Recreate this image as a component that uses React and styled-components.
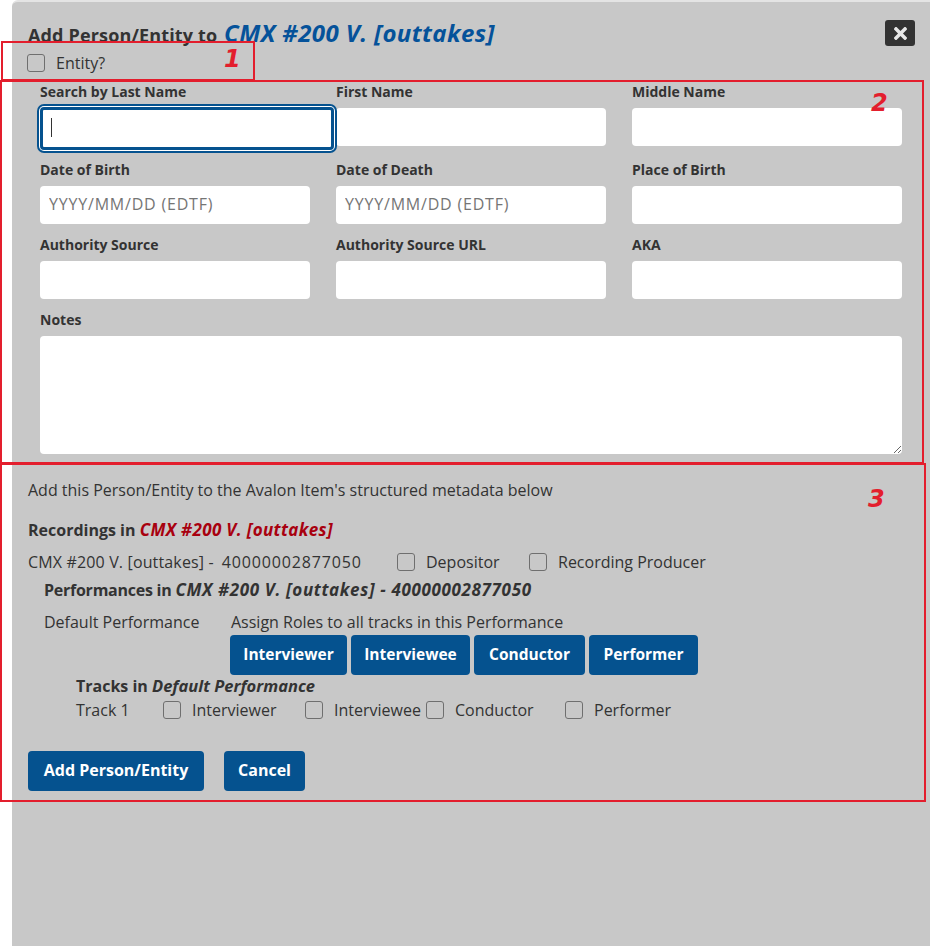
import React from "react";
import styled, { createGlobalStyle } from "styled-components";
import { FaTimes } from "react-icons/fa";

const Global = createGlobalStyle`
  html, body { margin: 0; padding: 0; background: #fff; }
  body { font-family: "Open Sans", "Liberation Sans", sans-serif; color: #333; overflow: hidden; }
  * { box-sizing: border-box; }
`;

const Page = styled.div`
  position: relative;
  width: 930px;
  height: 946px;
  overflow: hidden;
  padding: 0 0 0 12px;
`;
const Modal = styled.div`
  height: 946px;
  background: #c8c8c8;
  border-top: 2px solid #e4e4e4;
  border-radius: 6px 0 0 0;
  padding: 18px 15px 0 16px;
`;
const Header = styled.div`
  display: flex;
  justify-content: space-between;
  align-items: flex-start;
  height: 28px;
`;
const Title = styled.h2`
  margin: 0;
  font-size: 18px;
  line-height: 26px;
  font-weight: 700;
  letter-spacing: 0.15px;
`;
const TitleName = styled.em`
  display: inline-block;
  margin-left: 2px;
  font-size: 24px;
  line-height: 26px;
  letter-spacing: 0.4px;
  color: #05529a;
`;
const CloseButton = styled.button`
  width: 30px;
  height: 26px;
  border: 0;
  border-radius: 3px;
  background: #333;
  color: #e8e8e8;
  display: flex;
  align-items: center;
  justify-content: center;
  font-size: 19px;
  padding: 0;
`;
const CheckLabel = styled.label`
  display: inline-flex;
  align-items: center;
  gap: 11px;
  font-size: 16px;
  line-height: 24px;
  white-space: nowrap;
`;
const EntityRow = styled.div`
  height: 30px;
  margin-left: -1px;
  display: flex;
  align-items: center;
`;
const Check = styled.input.attrs({ type: "checkbox" })`
  appearance: none;
  width: 18px;
  height: 18px;
  margin: 0;
  border: 1px solid #6f6f6f;
  border-radius: 3px;
  background: transparent;
  flex: none;
`;
const Grid = styled.div`
  margin-top: 6px;
  padding-left: 12px;
  display: grid;
  grid-template-columns: repeat(3, 270px);
  column-gap: 26px;
  row-gap: 13px;
`;
const Field = styled.div`
  position: relative;
  grid-column: ${(p) => (p.$full ? "1 / -1" : "auto")};
  margin-bottom: ${(p) => (p.$first ? "3px" : "0")};
`;
const FieldLabel = styled.label`
  display: block;
  font-size: 14px;
  font-weight: 700;
  line-height: 16px;
  margin-bottom: 8px;
`;
const Input = styled.input`
  display: block;
  width: 100%;
  height: 38px;
  padding: 0 9px 2px;
  border: 0;
  border-radius: 4px;
  background: #fff;
  font-family: inherit;
  font-size: 16px;
  outline: 0;
  &::placeholder { color: #757575; opacity: 1; letter-spacing: 0.8px; }
`;
const FocusedInput = styled(Input)`
  position: relative;
  z-index: 1;
  width: calc(100% + 24px);
  height: 43px;
  margin: -1px 0 -4px;
  border: 3px solid #05528f;
  box-shadow: 0 0 0 1px #fff, 0 0 0 3px #05528f;
`;
const Caret = styled.span`
  position: absolute;
  z-index: 2;
  left: 11px;
  top: 34px;
  width: 1px;
  height: 19px;
  background: #333;
`;
const Notes = styled.textarea`
  display: block;
  width: 100%;
  height: 118px;
  border: 0;
  border-radius: 4px;
  background: #fff;
  outline: 0;
`;
const Roles = styled.div`
  margin-top: 24px;
`;
const Intro = styled.p`
  margin: 0;
  font-size: 16px;
  line-height: 24px;
`;
const Heading = styled.div`
  margin: ${(p) => p.$margin || "0"};
  font-size: 16px;
  line-height: 24px;
  font-weight: 700;
  white-space: nowrap;
  letter-spacing: ${(p) => p.$track || "0"};
  em {
    color: ${(p) => p.$accent || "#333"};
    font-size: ${(p) => p.$emSize || "17px"};
    letter-spacing: ${(p) => p.$emTrack || "0.35px"};
  }
`;
const Row = styled.div`
  display: flex;
  align-items: center;
  margin: ${(p) => p.$margin || "0"};
  font-size: 16px;
  line-height: 24px;
  white-space: nowrap;
`;
const Item = styled.span`
  display: flex;
  align-items: center;
  width: ${(p) => p.$width || "auto"};
  letter-spacing: ${(p) => p.$track || "0"};
  flex: none;
`;
const Digits = styled.span`
  letter-spacing: 0.85px;
  margin-left: 8px;
`;
const RoleBlock = styled.div`
  margin-left: 16px;
`;
const PerfRow = styled.div`
  display: flex;
  align-items: flex-start;
  margin-top: 8px;
  font-size: 16px;
  line-height: 24px;
  white-space: nowrap;
`;
const ButtonRow = styled.div`
  display: flex;
  gap: 4px;
  margin: 1px 0 0 -1px;
`;
const BlueButton = styled.button`
  width: ${(p) => p.$width};
  height: 40px;
  padding: 0 0 2px;
  border: 0;
  border-radius: 4px;
  background: #05528f;
  color: #fff;
  font-family: inherit;
  font-size: ${(p) => p.$size || "16px"};
  font-weight: 700;
`;
const Tracks = styled.div`
  margin: -1px 0 0 48px;
`;
const Actions = styled.div`
  display: flex;
  gap: 20px;
  margin-top: 29px;
`;
const Annotation = styled.div`
  position: absolute;
  left: ${(p) => p.$x}px;
  top: ${(p) => p.$y}px;
  width: ${(p) => p.$w}px;
  height: ${(p) => p.$h}px;
  border: 2px solid #e31e2d;
  pointer-events: none;
`;
const Badge = styled.span`
  position: absolute;
  left: ${(p) => p.$x}px;
  top: ${(p) => p.$y}px;
  font-family: "DejaVu Sans", sans-serif;
  font-size: 24px;
  line-height: 18px;
  font-weight: 700;
  font-style: italic;
  color: #e31e2d;
`;

const fields = [
  ["Date of Birth", "YYYY/MM/DD (EDTF)"],
  ["Date of Death", "YYYY/MM/DD (EDTF)"],
  ["Place of Birth"],
  ["Authority Source"],
  ["Authority Source URL"],
  ["AKA"],
];

const Box = ({ children }) => (
  <CheckLabel>
    <Check />
    {children}
  </CheckLabel>
);

export default function App() {
  return (
    <Page>
      <Global />
      <Modal>
        <Header>
          <Title>
            Add Person/Entity to <TitleName>CMX #200 V. [outtakes]</TitleName>
          </Title>
          <CloseButton aria-label="Close">
            <FaTimes />
          </CloseButton>
        </Header>
        <EntityRow>
          <Box>Entity?</Box>
        </EntityRow>
        <Grid>
          <Field $first>
            <FieldLabel>Search by Last Name</FieldLabel>
            <FocusedInput />
            <Caret />
          </Field>
          <Field $first>
            <FieldLabel>First Name</FieldLabel>
            <Input />
          </Field>
          <Field $first>
            <FieldLabel>Middle Name</FieldLabel>
            <Input />
          </Field>
          {fields.map(([label, hint]) => (
            <Field key={label}>
              <FieldLabel>{label}</FieldLabel>
              <Input placeholder={hint} />
            </Field>
          ))}
          <Field $full>
            <FieldLabel>Notes</FieldLabel>
            <Notes />
          </Field>
        </Grid>
        <Roles>
          <Intro>Add this Person/Entity to the Avalon Item's structured metadata below</Intro>
          <Heading $margin="16px 0 0" $accent="#a8000f">
            Recordings in <em>CMX #200 V. [outtakes]</em>
          </Heading>
          <Row $margin="8px 0 0">
            <Item $width="369px" $track="0.15px">
              CMX #200 V. [outtakes] -<Digits>40000002877050</Digits>
            </Item>
            <Item $width="132px"><Box>Depositor</Box></Item>
            <Box>Recording Producer</Box>
          </Row>
          <RoleBlock>
            <Heading $margin="4px 0 0" $track="-0.25px" $emTrack="0.65px">
              Performances in <em>CMX #200 V. [outtakes] - 40000002877050</em>
            </Heading>
            <PerfRow>
              <Item $width="187px">Default Performance</Item>
              <div>
                Assign Roles to all tracks in this Performance
                <ButtonRow>
                  <BlueButton $width="117px" $size="15.5px">Interviewer</BlueButton>
                  <BlueButton $width="119px" $size="15.5px">Interviewee</BlueButton>
                  <BlueButton $width="111px" $size="15.5px">Conductor</BlueButton>
                  <BlueButton $width="109px" $size="15.5px">Performer</BlueButton>
                </ButtonRow>
              </div>
            </PerfRow>
          </RoleBlock>
          <Tracks>
            <Heading $emSize="16.5px" $emTrack="0">
              Tracks in <em>Default Performance</em>
            </Heading>
            <Row>
              <Item $width="87px">Track 1</Item>
              <Item $width="142px"><Box>Interviewer</Box></Item>
              <Item $width="121px"><Box>Interviewee</Box></Item>
              <Item $width="139px"><Box>Conductor</Box></Item>
              <Box>Performer</Box>
            </Row>
          </Tracks>
          <Actions>
            <BlueButton $width="176px">Add Person/Entity</BlueButton>
            <BlueButton $width="81px">Cancel</BlueButton>
          </Actions>
        </Roles>
      </Modal>
      <Annotation $x={1} $y={41} $w={254} $h={40} />
      <Annotation $x={0} $y={80} $w={924} $h={384} />
      <Annotation $x={0} $y={463} $w={926} $h={339} />
      <Badge $x={224} $y={50}>1</Badge>
      <Badge $x={871} $y={94}>2</Badge>
      <Badge $x={868} $y={490}>3</Badge>
    </Page>
  );
}
